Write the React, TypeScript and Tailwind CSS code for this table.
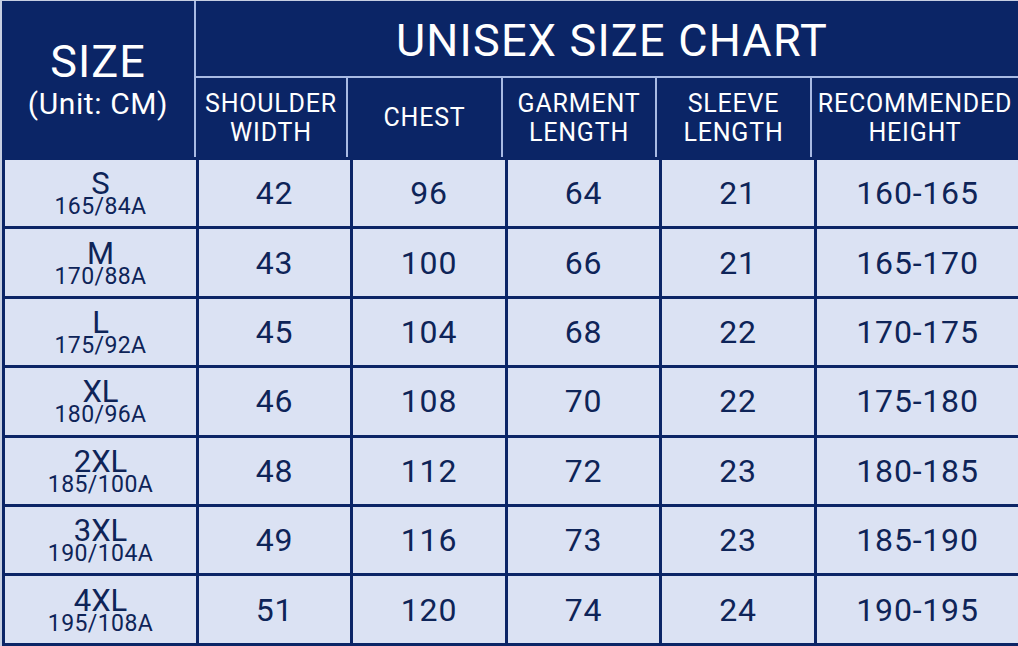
const rows = [
  { size: 'S', code: '165/84A', shoulder: '42', chest: '96', length: '64', sleeve: '21', height: '160-165' },
  { size: 'M', code: '170/88A', shoulder: '43', chest: '100', length: '66', sleeve: '21', height: '165-170' },
  { size: 'L', code: '175/92A', shoulder: '45', chest: '104', length: '68', sleeve: '22', height: '170-175' },
  { size: 'XL', code: '180/96A', shoulder: '46', chest: '108', length: '70', sleeve: '22', height: '175-180' },
  { size: '2XL', code: '185/100A', shoulder: '48', chest: '112', length: '72', sleeve: '23', height: '180-185' },
  { size: '3XL', code: '190/104A', shoulder: '49', chest: '116', length: '73', sleeve: '23', height: '185-190' },
  { size: '4XL', code: '195/108A', shoulder: '51', chest: '120', length: '74', sleeve: '24', height: '190-195' },
];

const headers = [
  { top: 'SHOULDER', bottom: 'WIDTH', w: 'w-[152px]' },
  { top: 'CHEST', bottom: '', w: 'w-[155px]' },
  { top: 'GARMENT', bottom: 'LENGTH', w: 'w-[154px]' },
  { top: 'SLEEVE', bottom: 'LENGTH', w: 'w-[155px]' },
  { top: 'RECOMMENDED', bottom: 'HEIGHT', w: 'flex-1' },
];

export default function App() {
  return (
    <div className="w-[1018px] h-[646px] overflow-hidden bg-[#c7cfe2] pt-px pl-[2px] font-['Roboto',sans-serif]">
      <div className="bg-[#0b2566] h-full">
        {/* header */}
        <div className="flex h-[156px] text-white">
          <div className="w-[194px] border-r-2 border-[#a9bbe4] flex flex-col items-center justify-center pt-[4px]">
            <div className="text-[45px] leading-[46px] tracking-[1px]">SIZE</div>
            <div className="text-[30px] leading-[38px] tracking-[0.6px]">(Unit: CM)</div>
          </div>
          <div className="flex-1 flex flex-col">
            <div className="h-[77px] border-b-2 border-[#a9bbe4] flex items-center justify-center">
              <span className="text-[45px] tracking-[1.2px] leading-none pt-[4px] pl-[10px]">UNISEX SIZE CHART</span>
            </div>
            <div className="flex flex-1">
              {headers.map((h, i) => (
                <div
                  key={h.top}
                  className={`${h.w} ${i < headers.length - 1 ? 'border-r-2 border-[#a9bbe4]' : ''} flex flex-col items-center justify-center text-[25px] leading-[29px] tracking-[0.8px] whitespace-nowrap`}
                >
                  <span>{h.top}</span>
                  {h.bottom && <span>{h.bottom}</span>}
                </div>
              ))}
            </div>
          </div>
        </div>

        {/* body */}
        <div className="grid grid-cols-[191px_151px_152px_151px_152px_1fr] auto-rows-[66.4px] gap-[3px] pt-[3px] pl-[3px] text-[#0e2458]">
          {rows.map((r) => (
            <div key={r.size} className="contents">
              <div className="bg-[#dbe2f3] flex flex-col items-center justify-center">
                <span className="text-[31px] leading-[26px] pt-[1px]">{r.size}</span>
                <span className="text-[23px] leading-[19px] tracking-[0.4px]">{r.code}</span>
              </div>
              {[r.shoulder, r.chest, r.length, r.sleeve, r.height].map((v, i) => (
                <div key={i} className="bg-[#dbe2f3] flex items-center justify-center text-[32px] tracking-[0.8px]">
                  {v}
                </div>
              ))}
            </div>
          ))}
        </div>
      </div>
    </div>
  );
}
